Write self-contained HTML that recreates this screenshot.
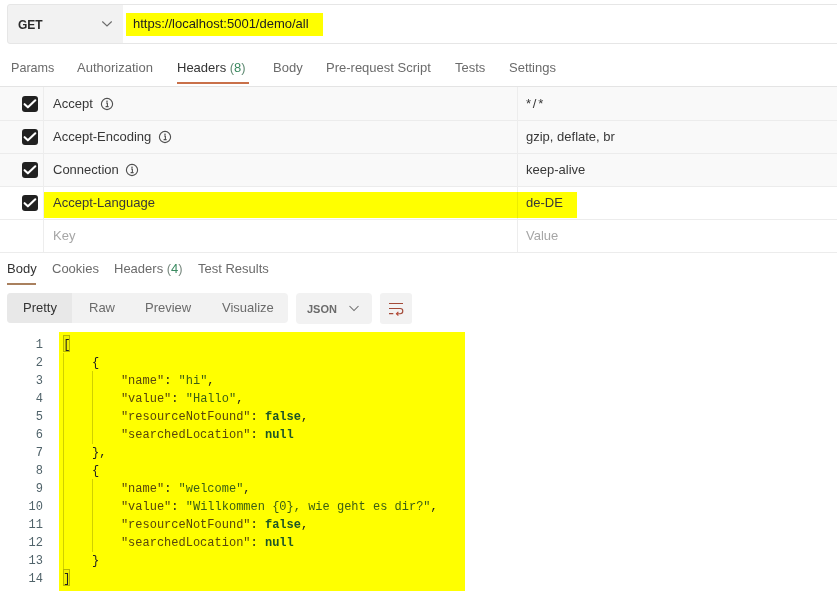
<!DOCTYPE html>
<html><head><meta charset="utf-8">
<style>
html,body{margin:0;padding:0;background:#fff;}
body{width:837px;height:602px;position:relative;overflow:hidden;will-change:transform;font-family:"Liberation Sans",sans-serif;color:#212121;}
.a{position:absolute;white-space:pre;line-height:1;}
.t{font-size:13px;color:#6b6b6b;}
.box{position:absolute;}
.mono{font-family:"Liberation Mono",monospace;}
.cb{position:absolute;left:22px;width:16px;height:16px;background:#212121;border-radius:3px;}
.cb svg{position:absolute;left:0;top:0;}
.info{position:absolute;width:12px;height:12px;}
.row{position:absolute;left:0;width:837px;height:33px;border-bottom:1px solid #ededed;box-sizing:border-box;}
.kt{font-size:13px;color:#383838;}
.ln{position:absolute;left:0;width:43px;text-align:right;font-family:"Liberation Mono",monospace;font-size:12px;line-height:18px;color:#50636a;}
.code{position:absolute;left:63.3px;font-family:"Liberation Mono",monospace;font-size:12px;line-height:18px;white-space:pre;color:#212121;}
.k{color:#58460c;}
.s{color:#3a5e14;}
.b{color:#1d5527;font-weight:bold;}
</style></head><body>

<!-- GET method box -->
<div class="box" style="left:7px;top:4px;width:117px;height:40px;background:#f2f2f2;border:1px solid #e6e6e6;box-sizing:border-box;border-radius:3px 0 0 3px;"></div>
<div class="a" style="left:18px;top:18.6px;font-size:12px;font-weight:bold;color:#2a2a2a;">GET</div>
<svg class="box" style="left:100px;top:18.5px;" width="14" height="10" viewBox="0 0 14 10"><path d="M2.3 2.5 L7 7 L11.7 2.5" fill="none" stroke="#6b6b6b" stroke-width="1.1"/></svg>

<!-- URL box -->
<div class="box" style="left:123px;top:4px;width:720px;height:40px;border:1px solid #e6e6e6;border-left:none;box-sizing:border-box;background:#fff;"></div>
<div class="box" style="left:126px;top:13px;width:197px;height:23px;background:#ffff00;"></div>
<div class="a" style="left:133px;top:16.5px;font-size:13px;color:#212121;">https://localhost:5001/demo/all</div>

<!-- request tabs -->
<div class="a t" style="left:11px;top:61.8px;font-size:12.6px;">Params</div>
<div class="a t" style="left:77px;top:61px;">Authorization</div>
<div class="a t" style="left:177px;top:61px;color:#333;">Headers <span style="color:#5f8a72;">(<span style="color:#3a8a60">8</span>)</span></div>
<div class="a t" style="left:273px;top:61px;">Body</div>
<div class="a t" style="left:326px;top:61px;">Pre-request Script</div>
<div class="a t" style="left:455px;top:61px;">Tests</div>
<div class="a t" style="left:509px;top:61px;">Settings</div>
<div class="box" style="left:177px;top:82px;width:72px;height:2px;background:#c97049;"></div>
<div class="box" style="left:0;top:86px;width:837px;height:1px;background:#e4e4e4;"></div>

<!-- headers table -->
<div class="box" style="left:0;top:87px;width:837px;height:100px;background:#f9f9f9;"></div>
<div class="box" style="left:0;top:120px;width:837px;height:1px;background:#ececec;"></div>
<div class="box" style="left:0;top:153px;width:837px;height:1px;background:#ececec;"></div>
<div class="box" style="left:0;top:186px;width:837px;height:1px;background:#ececec;"></div>
<div class="box" style="left:0;top:219px;width:837px;height:1px;background:#ececec;"></div>
<div class="box" style="left:0;top:252px;width:837px;height:1px;background:#ececec;"></div>
<div class="box" style="left:43px;top:87px;width:1px;height:165px;background:#ededed;"></div>
<div class="box" style="left:517px;top:87px;width:1px;height:165px;background:#ededed;"></div>

<div class="box" style="left:44px;top:192px;width:474px;height:26px;background:#ffff00;"></div>
<div class="box" style="left:518px;top:192px;width:59px;height:26px;background:#ffff00;"></div>
<div class="box" style="left:517px;top:192px;width:1px;height:26px;background:#ecec00;"></div>

<div class="cb" style="top:96px;"><svg width="16" height="16" viewBox="0 0 16 16"><path d="M2.6 8.2 L5.9 11.3 L13.3 4.3" fill="none" stroke="#fff" stroke-width="2.1" stroke-linecap="round" stroke-linejoin="round"/></svg></div>
<div class="cb" style="top:129px;"><svg width="16" height="16" viewBox="0 0 16 16"><path d="M2.6 8.2 L5.9 11.3 L13.3 4.3" fill="none" stroke="#fff" stroke-width="2.1" stroke-linecap="round" stroke-linejoin="round"/></svg></div>
<div class="cb" style="top:162px;"><svg width="16" height="16" viewBox="0 0 16 16"><path d="M2.6 8.2 L5.9 11.3 L13.3 4.3" fill="none" stroke="#fff" stroke-width="2.1" stroke-linecap="round" stroke-linejoin="round"/></svg></div>
<div class="cb" style="top:195px;"><svg width="16" height="16" viewBox="0 0 16 16"><path d="M2.6 8.2 L5.9 11.3 L13.3 4.3" fill="none" stroke="#fff" stroke-width="2.1" stroke-linecap="round" stroke-linejoin="round"/></svg></div>
<svg class="info" style="left:100px;top:97px;width:14px;height:14px" viewBox="0 0 14 14"><circle cx="7" cy="7" r="5.6" fill="none" stroke="#505050" stroke-width="1.15"/><circle cx="7" cy="4.3" r="0.8" fill="#505050"/><path d="M6 6 H7.4 V9.3 M5.6 9.6 H8.6" fill="none" stroke="#505050" stroke-width="1.1"/></svg>
<svg class="info" style="left:158px;top:130px;width:14px;height:14px" viewBox="0 0 14 14"><circle cx="7" cy="7" r="5.6" fill="none" stroke="#505050" stroke-width="1.15"/><circle cx="7" cy="4.3" r="0.8" fill="#505050"/><path d="M6 6 H7.4 V9.3 M5.6 9.6 H8.6" fill="none" stroke="#505050" stroke-width="1.1"/></svg>
<svg class="info" style="left:125px;top:163px;width:14px;height:14px" viewBox="0 0 14 14"><circle cx="7" cy="7" r="5.6" fill="none" stroke="#505050" stroke-width="1.15"/><circle cx="7" cy="4.3" r="0.8" fill="#505050"/><path d="M6 6 H7.4 V9.3 M5.6 9.6 H8.6" fill="none" stroke="#505050" stroke-width="1.1"/></svg>
<div class="a kt" style="left:53px;top:96.7px;">Accept</div>
<div class="a kt" style="left:526px;top:96.7px;letter-spacing:1.8px;">*/*</div>
<div class="a kt" style="left:53px;top:129.7px;">Accept-Encoding</div>
<div class="a kt" style="left:526px;top:129.7px;">gzip, deflate, br</div>
<div class="a kt" style="left:53px;top:162.7px;">Connection</div>
<div class="a kt" style="left:526px;top:162.7px;">keep-alive</div>
<div class="a kt" style="left:53px;top:195.7px;">Accept-Language</div>
<div class="a kt" style="left:526px;top:195.7px;">de-DE</div>
<div class="a kt" style="left:53px;top:228.7px;color:#a6a6a6;">Key</div>
<div class="a kt" style="left:526px;top:228.7px;color:#a6a6a6;">Value</div>

<!-- response tabs -->
<div class="a t" style="left:7px;top:261.6px;color:#333;">Body</div>
<div class="a t" style="left:52px;top:261.6px;">Cookies</div>
<div class="a t" style="left:114px;top:261.6px;">Headers <span style="color:#7a8a80;">(<span style="color:#3a8a60">4</span>)</span></div>
<div class="a t" style="left:198px;top:261.6px;">Test Results</div>
<div class="box" style="left:7px;top:283px;width:29px;height:2px;background:#a9805e;"></div>

<!-- toolbar -->
<div class="box" style="left:7px;top:293px;width:281px;height:29.5px;background:#f2f2f2;border-radius:4px;"></div>
<div class="box" style="left:7px;top:293px;width:65px;height:29.5px;background:#e8e8e8;border-radius:4px 0 0 4px;"></div>
<div class="a t" style="left:23px;top:300.8px;color:#333;">Pretty</div>
<div class="a t" style="left:89px;top:300.8px;">Raw</div>
<div class="a t" style="left:145px;top:300.8px;">Preview</div>
<div class="a t" style="left:222px;top:300.8px;">Visualize</div>

<div class="box" style="left:296px;top:293px;width:76px;height:31px;background:#f2f2f2;border-radius:4px;"></div>
<div class="a" style="left:307px;top:303.8px;font-size:11px;font-weight:bold;color:#6b6b6b;">JSON</div>
<svg class="box" style="left:348px;top:303px;" width="12" height="10" viewBox="0 0 12 10"><path d="M1.5 3 L6 7.5 L10.5 3" fill="none" stroke="#6b6b6b" stroke-width="1.05"/></svg>

<div class="box" style="left:380px;top:293px;width:32px;height:31px;background:#f2f2f2;border-radius:3px;"></div>
<svg class="box" style="left:387px;top:300px;" width="18" height="18" viewBox="0 0 18 18"><path d="M2 3.5 H16 M2 8.5 H13.2 A2.6 2.6 0 0 1 13.2 13.7 H9.8 M2 13.6 H6.3" fill="none" stroke="#a34a38" stroke-width="1.15"/><path d="M11.4 11.9 L9.5 13.7 L11.4 15.5" fill="none" stroke="#b8432f" stroke-width="1.15"/></svg>

<!-- code -->
<div class="box" style="left:59px;top:332px;width:406px;height:259px;background:#ffff00;"></div>
<div class="ln" style="top:336px;">1<br>2<br>3<br>4<br>5<br>6<br>7<br>8<br>9<br>10<br>11<br>12<br>13<br>14</div>
<div class="box" style="left:63px;top:353px;width:1px;height:216px;background:#d0d000;"></div>
<div class="box" style="left:92px;top:371px;width:1px;height:73px;background:#d0d000;"></div>
<div class="box" style="left:92px;top:479px;width:1px;height:73px;background:#d0d000;"></div>
<div class="box" style="left:63px;top:335px;width:7px;height:17px;border:1px solid #b8b800;box-sizing:border-box;background:#f0f000;"></div>
<div class="box" style="left:63px;top:569px;width:7px;height:17px;border:1px solid #b8b800;box-sizing:border-box;background:#f0f000;"></div>
<div class="code" style="top:336px;">[
    {
        <span class="k">"name"</span>: <span class="s">"hi"</span>,
        <span class="k">"value"</span>: <span class="s">"Hallo"</span>,
        <span class="k">"resourceNotFound"</span>: <span class="b">false</span>,
        <span class="k">"searchedLocation"</span>: <span class="b">null</span>
    },
    {
        <span class="k">"name"</span>: <span class="s">"welcome"</span>,
        <span class="k">"value"</span>: <span class="s">"Willkommen {0}, wie geht es dir?"</span>,
        <span class="k">"resourceNotFound"</span>: <span class="b">false</span>,
        <span class="k">"searchedLocation"</span>: <span class="b">null</span>
    }
]</div>

</body></html>
